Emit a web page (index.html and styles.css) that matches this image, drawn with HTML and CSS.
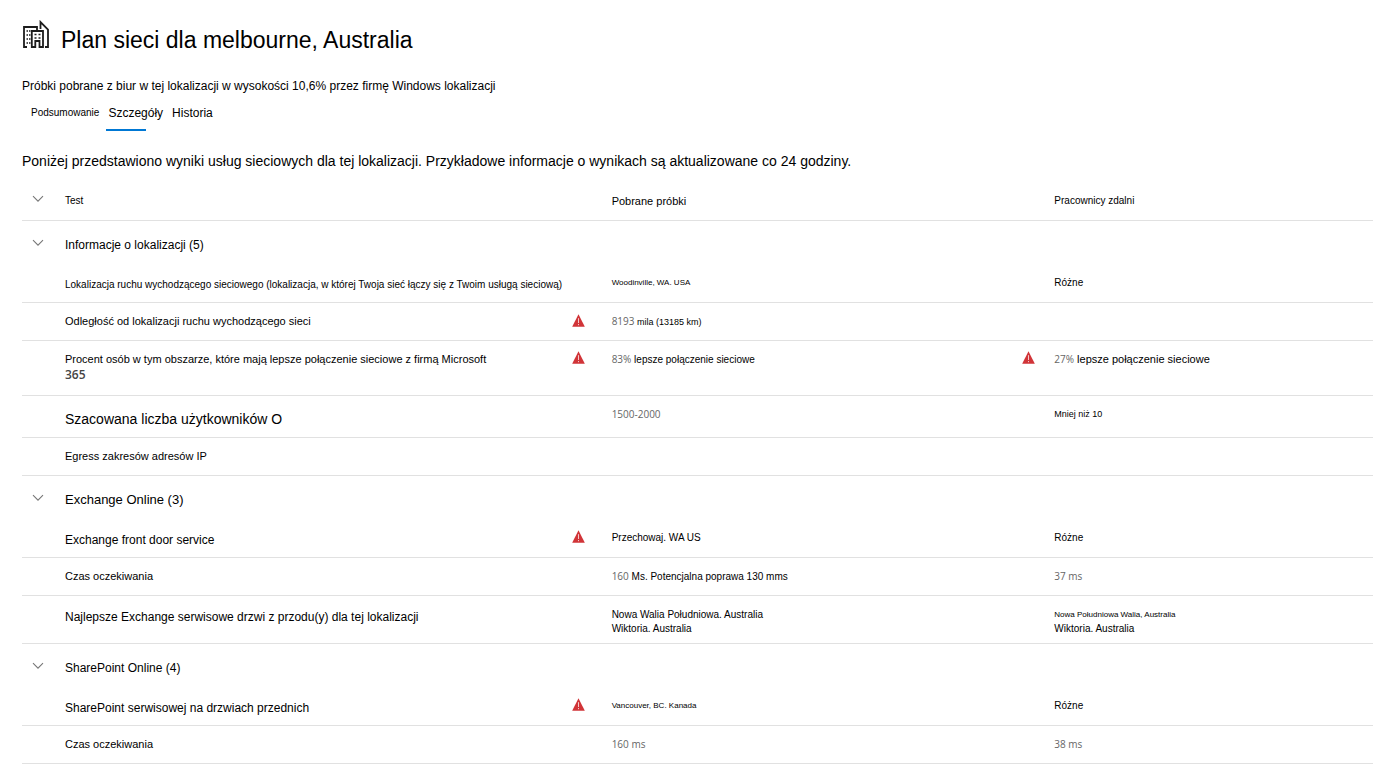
FILE: index.html
```html
<!DOCTYPE html>
<html lang="pl">
<head>
<meta charset="utf-8">
<title>Plan sieci dla melbourne, Australia</title>
<link rel="stylesheet" href="styles.css">
</head>
<body>
<svg class="defs" aria-hidden="true">
  <symbol id="chevron" viewBox="0 0 12 8"><path d="M1 1.2 6 6.2 11 1.2" fill="none" stroke="#777" stroke-width="1.1"/></symbol>
  <symbol id="warning" viewBox="0 0 13 13"><path d="M6.5 .3 12.8 12.8H.2Z" fill="#d13438"/><path d="M6.5 4.2V9M6.5 10v1.200" stroke="#f3c9ca" stroke-width="1"/></symbol>
</svg>
<main class="page">
  <header class="heading">
    <svg class="building" viewBox="0 0 27 28" aria-hidden="true">
      <path d="M5 27H2V7H15V10M18.500 9V2L26 9.500V27H23" fill="none" stroke="#1c1c1c" stroke-width="1.800"/>
      <path d="M9.800 27V11H21V27H17.500V21H13.300V27Z" fill="none" stroke="#1c1c1c" stroke-width="1.800"/>
      <path d="M4.500 11h1.500M7 11h1.500M4.500 15h1.500M7 15h1.500M4.500 19h1.500M7 19h1.500M4.500 23h1.500M7 23h1.500M12.500 14.500h2M16.500 14.500h2M12.500 18h2M16.500 18h2" stroke="#1c1c1c" stroke-width="1.600"/>
    </svg>
    <h1 class="title">Plan sieci dla melbourne, Australia</h1>
  </header>
  <p class="samples">Próbki pobrane z biur w tej lokalizacji w wysokości 10,6% przez firmę Windows lokalizacji</p>
  <div class="tabs" role="tablist">
    <button class="tab t10" role="tab" aria-selected="false">Podsumowanie</button>
    <button class="tab tab-active" role="tab" aria-selected="true">Szczegóły</button>
    <button class="tab" role="tab" aria-selected="false">Historia</button>
  </div>
  <p class="intro">Poniżej przedstawiono wyniki usług sieciowych dla tej lokalizacji. Przykładowe informacje o wynikach są aktualizowane co 24 godziny.</p>
  <table class="results">
    <colgroup><col class="c-toggle"><col class="c-test"><col class="c-icon"><col class="c-sample"><col class="c-icon-remote"><col></colgroup>
    <thead>
      <tr>
        <th><button class="toggle" aria-label="Test"><svg><use href="#chevron"/></svg></button></th>
        <th class="t10">Test</th><th></th><th class="t11">Pobrane próbki</th><th></th><th class="t10">Pracownicy zdalni</th>
      </tr>
    </thead>
    <tbody>
      <tr class="group">
        <td><button class="toggle" aria-label="Informacje o lokalizacji"><svg><use href="#chevron"/></svg></button></td>
        <td colspan="5">Informacje o lokalizacji (5)</td>
      </tr>
      <tr><td></td><td class="t10 lowered">Lokalizacja ruchu wychodzącego sieciowego (lokalizacja, w której Twoja sieć łączy się z Twoim usługą sieciową)</td><td></td><td class="t8">Woodinville, WA. USA</td><td></td><td class="t10">Różne</td></tr>
      <tr><td></td><td class="t11">Odległość od lokalizacji ruchu wychodzącego sieci</td><td><svg class="warn"><use href="#warning"/></svg></td><td class="t9"><span class="num">8193</span> mila (13185 km)</td><td></td><td></td></tr>
      <tr class="tall"><td></td><td class="t11">Procent osób w tym obszarze, które mają lepsze połączenie sieciowe z firmą Microsoft <strong class="year">365</strong></td><td><svg class="warn"><use href="#warning"/></svg></td><td class="t10"><span class="num">83%</span> lepsze połączenie sieciowe</td><td><svg class="warn"><use href="#warning"/></svg></td><td class="t11"><span class="num">27%</span> lepsze połączenie sieciowe</td></tr>
      <tr class="mid"><td></td><td class="t14 lowered">Szacowana liczba użytkowników O</td><td></td><td class="raised"><span class="num">1500-2000</span></td><td></td><td class="t9 raised">Mniej niż 10</td></tr>
      <tr><td></td><td class="t11">Egress zakresów adresów IP</td><td></td><td></td><td></td><td></td></tr>
      <tr class="group">
        <td><button class="toggle" aria-label="Exchange Online"><svg><use href="#chevron"/></svg></button></td>
        <td class="t13" colspan="5">Exchange Online (3)</td>
      </tr>
      <tr><td></td><td class="lowered">Exchange front door service</td><td><svg class="warn"><use href="#warning"/></svg></td><td class="t10">Przechowaj. WA US</td><td></td><td class="t10">Różne</td></tr>
      <tr><td></td><td class="t11">Czas oczekiwania</td><td></td><td class="t10"><span class="num">160</span> Ms. Potencjalna poprawa 130 mms</td><td></td><td><span class="num">37 ms</span></td></tr>
      <tr class="double"><td></td><td class="raised">Najlepsze Exchange serwisowe drzwi z przodu(y) dla tej lokalizacji</td><td></td><td class="t10 lowered">Nowa Walia Południowa. Australia<br>Wiktoria. Australia</td><td></td><td class="t10 lowered"><span class="t8">Nowa Południowa Walia, Australia</span><br>Wiktoria. Australia</td></tr>
      <tr class="group">
        <td><button class="toggle" aria-label="SharePoint Online"><svg><use href="#chevron"/></svg></button></td>
        <td colspan="5">SharePoint Online (4)</td>
      </tr>
      <tr><td></td><td class="lowered">SharePoint serwisowej na drzwiach przednich</td><td><svg class="warn"><use href="#warning"/></svg></td><td class="t8">Vancouver, BC. Kanada</td><td></td><td class="t10">Różne</td></tr>
      <tr><td></td><td class="t11">Czas oczekiwania</td><td></td><td><span class="num">160 ms</span></td><td></td><td><span class="num">38 ms</span></td></tr>
    </tbody>
  </table>
</main>
</body>
</html>
```
FILE: styles.css
```css
* { box-sizing: border-box; }
body { margin: 0; background: #fff; color: #000; font: 12px/16px "Liberation Sans", Arial, sans-serif; }
.defs { position: absolute; width: 0; height: 0; }
.page { padding: 20px 27px 20px 22px; }
.heading { display: flex; align-items: flex-start; gap: 12px; }
.building { width: 27px; height: 28px; flex: none; }
.title { margin: 4px 0 0; font-size: 23px; line-height: 32px; font-weight: 400; }
.samples { margin: 22px 0 0; }
.tabs { display: flex; align-items: center; gap: 5px; padding-left: 7px; margin-top: 8px; }
.tab { position: relative; height: 30px; padding: 0 2px 8px; border: 0; background: none; color: #000; font: inherit; line-height: 16px; cursor: pointer; }
.tab.t10 { font-size: 10px; }
.tab-active::after { content: ""; position: absolute; left: 0; bottom: 1px; width: 40px; height: 2px; background: #0078d4; }
.intro { margin: 20px 0 12px; font-size: 14px; line-height: 18px; }
.results { width: 100%; table-layout: fixed; border-collapse: collapse; }
.c-toggle { width: 43px; }
.c-test { width: 37.5%; }
.c-icon { width: 40px; }
.c-icon-remote { width: 32px; }
.c-sample { width: 30.4%; }
.results th, .results td { height: 38px; padding: 0; text-align: left; font-weight: 400; vertical-align: middle; }
.results tr { border-bottom: 1px solid #e1e1e1; }
.results .group { border-bottom: 0; }
.results .group td { height: 44px; padding-top: 6px; }
.results .mid td { height: 42px; }
.results .tall td { height: 55px; padding-top: 10px; vertical-align: top; }
.results .double td { height: 48px; line-height: 14px; }
.results .raised { padding-bottom: 4px; }
.results .lowered { padding-top: 5px; }
.toggle { display: block; width: 12px; height: 8px; margin: 0 0 4px 10px; padding: 0; border: 0; background: none; cursor: pointer; }
.toggle svg { display: block; width: 12px; height: 8px; }
.warn { display: block; width: 13px; height: 13px; margin-bottom: 2px; }
.num { color: #666; font: 10px/16px "Open Sans", sans-serif; }
.year { display: block; color: #444; font: 600 12px/16px "Open Sans", sans-serif; }
.t8 { font-size: 8px; }
.t9 { font-size: 9px; }
.t10 { font-size: 10px; }
.t11 { font-size: 11px; }
.t13 { font-size: 13px; }
.t14 { font-size: 14px; }
```
